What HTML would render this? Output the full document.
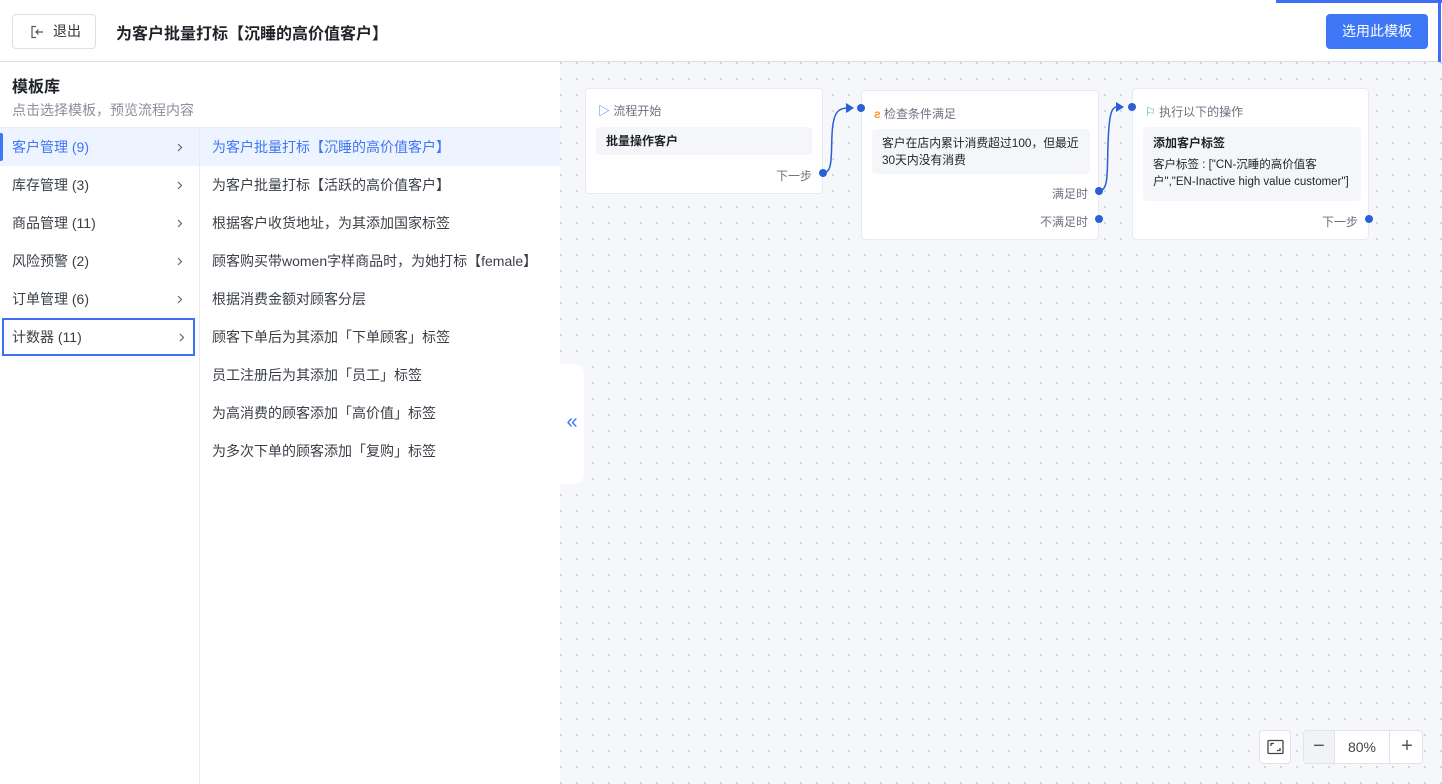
<!DOCTYPE html>
<html><head><meta charset="utf-8"><style>
*{box-sizing:border-box;margin:0;padding:0}
body{width:1442px;height:784px;overflow:hidden;background:#fff;font-family:"Liberation Sans","Noto Sans CJK SC",sans-serif;color:#1f2329;position:relative}
.hdr{position:absolute;left:0;top:0;width:1442px;height:62px;border-bottom:1px solid #dcdfe6;background:#fff}
.exit{position:absolute;left:12px;top:14px;width:84px;height:35px;border:1px solid #dcdfe6;border-radius:4px;font-size:14px;color:#333;line-height:33px;padding-left:40px}
.title{position:absolute;left:116px;top:20px;font-size:16px;font-weight:bold;color:#1f2329}
.btn{position:absolute;left:1326px;top:14px;width:102px;height:35px;background:#3d77f5;border-radius:4px;color:#fff;font-size:14px;line-height:35px;text-align:center}
.left{position:absolute;left:0;top:62px;width:560px;height:722px;background:#fff}
.lib{position:absolute;left:12px;top:11px;font-size:16px;font-weight:bold}
.sub{position:absolute;left:12px;top:38px;font-size:14px;color:#8a8f99}
.cats{position:absolute;left:0;top:65px;width:200px;height:657px;border-right:1px solid #e8eaef;border-top:1px solid #e8eaef}
.cat{position:relative;height:38px;line-height:38px;padding-left:12px;font-size:14px;color:#3a3f47}
.cat svg{position:absolute;right:16px;top:15px}
.cat.act{background:#eef4ff;color:#3d77f5}
.cat.act:before{content:"";position:absolute;left:0;top:5px;width:3px;height:28px;background:#3d77f5;border-radius:0 2px 2px 0}
.cat.foc{outline:2px solid #3d6ef5;outline-offset:-2px;margin:0 4px 0 2px;padding-left:10px}
.cat.foc svg{right:10px}
.tpls{position:absolute;left:200px;top:65px;width:360px;border-top:1px solid #e8eaef}
.tpl{height:38px;line-height:38px;padding-left:12px;font-size:14px;color:#3a3f47}
.tpl.act{background:#eef4ff;color:#3d77f5}
.canvas{position:absolute;left:560px;top:62px;width:882px;height:722px;background-color:#f6f7fb;background-image:radial-gradient(circle,#d3d6de 1px,transparent 1.3px);background-size:16px 16px;background-position:-7px -7px}
.tab{position:absolute;left:560px;top:364px;width:24px;height:120px;background:#fff;border-radius:0 10px 10px 0;color:#3d77f5;font-size:20px;line-height:116px;text-align:center}
.node{position:absolute;background:#fff;border:1px solid #e8eaef;border-radius:4px}
.nh{position:absolute;left:12px;top:13px;font-size:12px;color:#6b7280}
.box{position:absolute;background:#f5f6fa;border-radius:4px;font-size:12px;color:#1f2329}
.pl{position:absolute;font-size:12px;color:#6b7280}
.dot{position:absolute;width:8px;height:8px;border-radius:50%;background:#2a5fd6}
.zb{position:absolute;background:#fff;border:1px solid #e0e3ea;border-radius:4px}
.topline{position:absolute;left:1276px;top:0;width:166px;height:3px;background:#3d6ef5}
.rline{position:absolute;left:1438px;top:0;width:3px;height:62px;background:#3d6ef5}
</style></head><body>
<div class="hdr">
 <div class="exit"><svg style="position:absolute;left:17px;top:10px" width="14" height="14" viewBox="0 0 14 14" fill="none" stroke="#555" stroke-width="1.2"><path d="M6 1.5H2v11h4M6 7h7M8.5 4.5L6 7l2.5 2.5"/></svg>退出</div>
 <div class="title">为客户批量打标【沉睡的高价值客户】</div>
 <div class="btn">选用此模板</div>
</div>
<div class="topline"></div><div class="rline"></div>
<div class="left">
 <div class="lib">模板库</div>
 <div class="sub">点击选择模板，预览流程内容</div>
 <div class="cats">
  <div class="cat act">客户管理 (9)<svg width="6" height="9" viewBox="0 0 6 9" fill="none" stroke="#666" stroke-width="1.2"><path d="M1 1l3.5 3.5L1 8"/></svg></div>
  <div class="cat">库存管理 (3)<svg width="6" height="9" viewBox="0 0 6 9" fill="none" stroke="#666" stroke-width="1.2"><path d="M1 1l3.5 3.5L1 8"/></svg></div>
  <div class="cat">商品管理 (11)<svg width="6" height="9" viewBox="0 0 6 9" fill="none" stroke="#666" stroke-width="1.2"><path d="M1 1l3.5 3.5L1 8"/></svg></div>
  <div class="cat">风险预警 (2)<svg width="6" height="9" viewBox="0 0 6 9" fill="none" stroke="#666" stroke-width="1.2"><path d="M1 1l3.5 3.5L1 8"/></svg></div>
  <div class="cat">订单管理 (6)<svg width="6" height="9" viewBox="0 0 6 9" fill="none" stroke="#666" stroke-width="1.2"><path d="M1 1l3.5 3.5L1 8"/></svg></div>
  <div class="cat foc">计数器 (11)<svg width="6" height="9" viewBox="0 0 6 9" fill="none" stroke="#666" stroke-width="1.2"><path d="M1 1l3.5 3.5L1 8"/></svg></div>
 </div>
 <div class="tpls">
  <div class="tpl act">为客户批量打标【沉睡的高价值客户】</div>
  <div class="tpl">为客户批量打标【活跃的高价值客户】</div>
  <div class="tpl">根据客户收货地址，为其添加国家标签</div>
  <div class="tpl">顾客购买带women字样商品时，为她打标【female】</div>
  <div class="tpl">根据消费金额对顾客分层</div>
  <div class="tpl">顾客下单后为其添加「下单顾客」标签</div>
  <div class="tpl">员工注册后为其添加「员工」标签</div>
  <div class="tpl">为高消费的顾客添加「高价值」标签</div>
  <div class="tpl">为多次下单的顾客添加「复购」标签</div>
 </div>
</div>
<div class="canvas"></div>
<div class="tab">«</div>

<div class="node" style="left:585px;top:88px;width:238px;height:106px">
 <div class="nh"><span style="color:#3d77f5">▷</span> 流程开始</div>
 <div class="box" style="left:10px;top:38px;width:216px;height:28px;line-height:28px;padding-left:10px;font-weight:bold">批量操作客户</div>
 <div class="pl" style="right:10px;top:78px">下一步</div>
</div>
<div class="node" style="left:861px;top:90px;width:238px;height:150px">
 <div class="nh" style="left:12px;top:14px"><span style="color:#f59a23;font-weight:bold">ƨ</span> 检查条件满足</div>
 <div class="box" style="left:10px;top:38px;width:218px;height:45px;padding:6px 6px 6px 10px;line-height:17px;font-size:11.8px">客户在店内累计消费超过100，但最近<br>30天内没有消费</div>
 <div class="pl" style="right:10px;top:94px">满足时</div>
 <div class="pl" style="right:10px;top:122px">不满足时</div>
</div>
<div class="node" style="left:1132px;top:88px;width:237px;height:152px">
 <div class="nh" style="left:12px;top:14px"><span style="color:#3cb371">⚐</span> 执行以下的操作</div>
 <div class="box" style="left:10px;top:38px;width:218px;height:74px;padding:8px 10px;line-height:17px"><div style="font-weight:bold">添加客户标签</div><div style="margin-top:5px;font-size:11.5px">客户标签 : ["CN-沉睡的高价值客户","EN-Inactive high value customer"]</div></div>
 <div class="pl" style="right:10px;top:124px">下一步</div>
</div>
<svg style="position:absolute;left:0;top:0" width="1442" height="784">
 <path d="M823 173 C833 173 831 155 832 135 C833 112 838 108 848 108" fill="none" stroke="#2a5fd6" stroke-width="1.5"/>
 <path d="M846 103 L854 108 L846 113Z" fill="#2a5fd6"/>
 <path d="M1099 191 C1109 191 1107 170 1108 145 C1109 112 1112 107 1117 107" fill="none" stroke="#2a5fd6" stroke-width="1.5"/>
 <path d="M1116 102 L1124 107 L1116 112Z" fill="#2a5fd6"/>
</svg>
<div class="dot" style="left:819px;top:169px"></div>
<div class="dot" style="left:857px;top:104px"></div>
<div class="dot" style="left:1095px;top:187px"></div>
<div class="dot" style="left:1095px;top:215px"></div>
<div class="dot" style="left:1128px;top:103px"></div>
<div class="dot" style="left:1365px;top:215px"></div>

<div class="zb" style="left:1259px;top:730px;width:32px;height:34px"><svg style="position:absolute;left:7px;top:8px" width="17" height="16" viewBox="0 0 17 16" fill="none" stroke="#444" stroke-width="1.3"><rect x="1" y="1.5" width="15" height="13" rx="1"/><path d="M4 7V4.5h3M13 9v2.5h-3"/></svg></div>
<div class="zb" style="left:1303px;top:730px;width:120px;height:34px;overflow:hidden">
 <div style="position:absolute;left:0;top:0;width:31px;height:34px;background:#f2f3f6;border-right:1px solid #e0e3ea;text-align:center;line-height:31px;font-size:20px;color:#555">−</div>
 <div style="position:absolute;left:31px;top:0;width:54px;height:34px;line-height:32px;text-align:center;font-size:14px;color:#444">80%</div>
 <div style="position:absolute;left:85px;top:0;width:35px;height:34px;border-left:1px solid #e0e3ea;text-align:center;line-height:31px;font-size:20px;color:#555">+</div>
</div>
</body></html>
